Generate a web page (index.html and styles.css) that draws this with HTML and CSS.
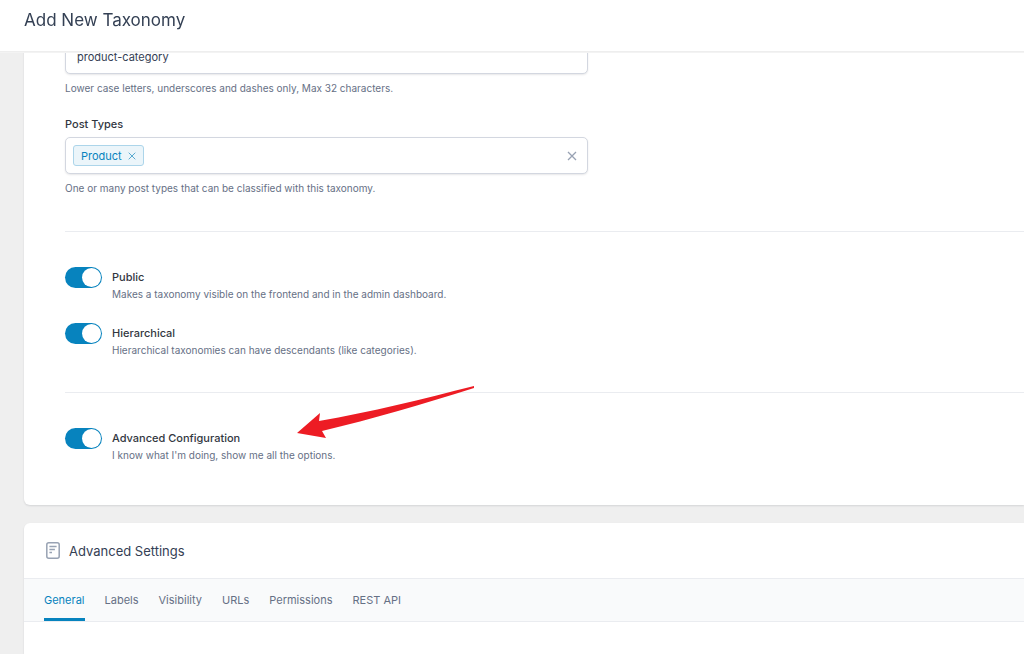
FILE: index.html
```html
<!DOCTYPE html>
<html lang="en">
<head>
<meta charset="utf-8">
<meta name="viewport" content="width=device-width, initial-scale=1">
<title>Add New Taxonomy</title>
<link rel="stylesheet" href="styles.css">
</head>
<body>
<header class="topbar"><h1 class="topbar-title">Add New Taxonomy</h1></header>
<main class="page">
  <form class="card basic">
    <div class="field">
      <input class="text-input" type="text" value="product-category" aria-label="Taxonomy Key" aria-describedby="key-hint">
      <p class="hint" id="key-hint">Lower case letters, underscores and dashes only, Max 32 characters.</p>
    </div>
    <div class="field">
      <span class="label" id="types-label">Post Types</span>
      <div class="multi" role="group" aria-labelledby="types-label">
        <span class="tag">Product
          <button class="icon-button" type="button" aria-label="Remove Product"><svg class="cross-small" viewBox="0 0 8 8"><path d="M.7.7l6.6 6.6M7.3.7L.7 7.3"/></svg></button>
        </span>
        <button class="icon-button clear" type="button" aria-label="Clear all"><svg class="cross" viewBox="0 0 10 10"><path d="M1 1l8 8M9 1L1 9"/></svg></button>
      </div>
      <p class="hint">One or many post types that can be classified with this taxonomy.</p>
    </div>
    <div class="group">
      <div class="switch-row">
        <input class="switch" type="checkbox" role="switch" id="public" checked>
        <div class="switch-text">
          <label class="label" for="public">Public</label>
          <p class="hint">Makes a taxonomy visible on the frontend and in the admin dashboard.</p>
        </div>
      </div>
      <div class="switch-row">
        <input class="switch" type="checkbox" role="switch" id="hierarchical" checked>
        <div class="switch-text">
          <label class="label" for="hierarchical">Hierarchical</label>
          <p class="hint">Hierarchical taxonomies can have descendants (like categories).</p>
        </div>
      </div>
    </div>
    <div class="group">
      <div class="switch-row">
        <input class="switch" type="checkbox" role="switch" id="advanced" checked>
        <div class="switch-text">
          <label class="label" for="advanced">Advanced Configuration</label>
          <p class="hint">I know what I'm doing, show me all the options.</p>
        </div>
      </div>
      <svg class="arrow" viewBox="0 0 180 54" aria-hidden="true"><path d="M0 48L23 28L22 36C74 27 126 14 177 1L177 3C126 19 76 34 25 46L29 53Z"/></svg>
    </div>
  </form>
  <section class="card settings">
    <div class="settings-head">
      <svg class="doc-icon" viewBox="0 0 14 17" aria-hidden="true"><rect x=".8" y=".8" width="12.4" height="15.4" rx="2"/><path d="M3.4 4.6h7.2M3.4 7.6h5.5M3.4 10.6h2.6"/></svg>
      <h2 class="settings-title">Advanced Settings</h2>
    </div>
    <nav class="tabs">
      <a class="tab active" href="#general" aria-current="page">General</a>
      <a class="tab" href="#labels">Labels</a>
      <a class="tab" href="#visibility">Visibility</a>
      <a class="tab" href="#urls">URLs</a>
      <a class="tab" href="#permissions">Permissions</a>
      <a class="tab" href="#rest">REST API</a>
    </nav>
    <div class="panel"></div>
  </section>
</main>
</body>
</html>
```
FILE: styles.css
```css
* { box-sizing: border-box; }
body {
  margin: 0;
  background: #efefef;
  color: #344054;
  font-family: Inter, "Liberation Sans", sans-serif;
  font-size: 11px;
  line-height: 16px;
}
h1, h2, p { margin: 0; font-weight: 400; }

.topbar {
  position: fixed;
  inset: 0 0 auto;
  z-index: 2;
  padding: 8px 24px 18px;
  background: #fff;
  border-bottom: 1px solid #eee;
  box-shadow: 0 1px 0 #f3f3f3;
}
.topbar-title { font-size: 17px; line-height: 25px; }

.page {
  display: flex;
  flex-direction: column;
  gap: 18px;
  min-height: 100vh;
  padding-left: 24px;
}
.card {
  background: #fff;
  box-shadow: 0 1px 2px rgba(16, 24, 40, .12);
}
.basic {
  padding: 37px 0 42px 41px;
  border-radius: 0 0 0 6px;
}
.field { max-width: 523px; }
.field + .field { margin-top: 19px; }
.field .hint { margin-top: 6px; line-height: 17px; }
.text-input, .multi {
  width: 100%;
  height: 37px;
  border: 1px solid #d3d7e0;
  border-radius: 5px;
  background: #fff;
  box-shadow: 0 1px 2px rgba(16, 24, 40, .1);
}
.text-input {
  display: block;
  padding: 2px 11px 0;
  color: #344054;
  font: inherit;
}
.label {
  display: block;
  color: #32373f;
  font-weight: 500;
}
.hint { color: #667085; font-size: 10px; }
.multi {
  display: flex;
  align-items: center;
  justify-content: space-between;
  margin-top: 5px;
  padding: 0 10px 0 7px;
}
.tag {
  display: flex;
  align-items: center;
  gap: 6px;
  height: 21px;
  padding: 0 7px;
  border: 1px solid #acd5ea;
  border-radius: 3px;
  background: #ebf5fa;
  color: #0783be;
}
.icon-button {
  display: flex;
  padding: 0;
  border: 0;
  background: none;
  color: #5aaad0;
}
.clear { color: #98a2b3; }
.icon-button svg { fill: none; stroke: currentColor; }
.cross-small { width: 8px; height: 8px; }
.cross { width: 10px; height: 10px; stroke-width: 1.3; }

.group {
  position: relative;
  display: flex;
  flex-direction: column;
  gap: 21px;
  margin-top: 34px;
  padding-top: 35px;
  border-top: 1px solid #eaecf0;
}
.switch-row { display: flex; gap: 10px; }
.switch {
  display: flex;
  appearance: none;
  flex: none;
  width: 37px;
  height: 21px;
  margin: 0;
  padding: 1px;
  border-radius: 11px;
  background: #0783be;
}
.switch::before {
  content: "";
  width: 19px;
  height: 19px;
  border-radius: 50%;
  background: #fff;
}
.switch:checked { justify-content: flex-end; }
.switch-text .label { line-height: 20px; }
.switch-text .hint { line-height: 15px; }
.arrow {
  position: absolute;
  top: -8px;
  left: 232px;
  width: 180px;
  height: 54px;
  fill: #ed1c24;
}

.settings {
  flex: 1;
  border-radius: 6px 0 0 0;
}
.settings-head {
  display: flex;
  align-items: center;
  gap: 9px;
  height: 55px;
  padding-left: 22px;
}
.doc-icon {
  width: 14px;
  height: 17px;
  fill: none;
  stroke: #98a2b3;
  stroke-width: 1.5;
}
.settings-title { font-size: 13px; line-height: 20px; }
.tabs {
  display: flex;
  gap: 20px;
  padding-left: 20px;
  border: solid #eaecf0;
  border-width: 1px 0;
  background: #f9fafb;
}
.tab {
  padding: 13px 0 10px;
  border-bottom: 3px solid transparent;
  color: #667085;
  text-decoration: none;
}
.active { border-color: #0783be; color: #0783be; }
.panel { min-height: 32px; }
```
